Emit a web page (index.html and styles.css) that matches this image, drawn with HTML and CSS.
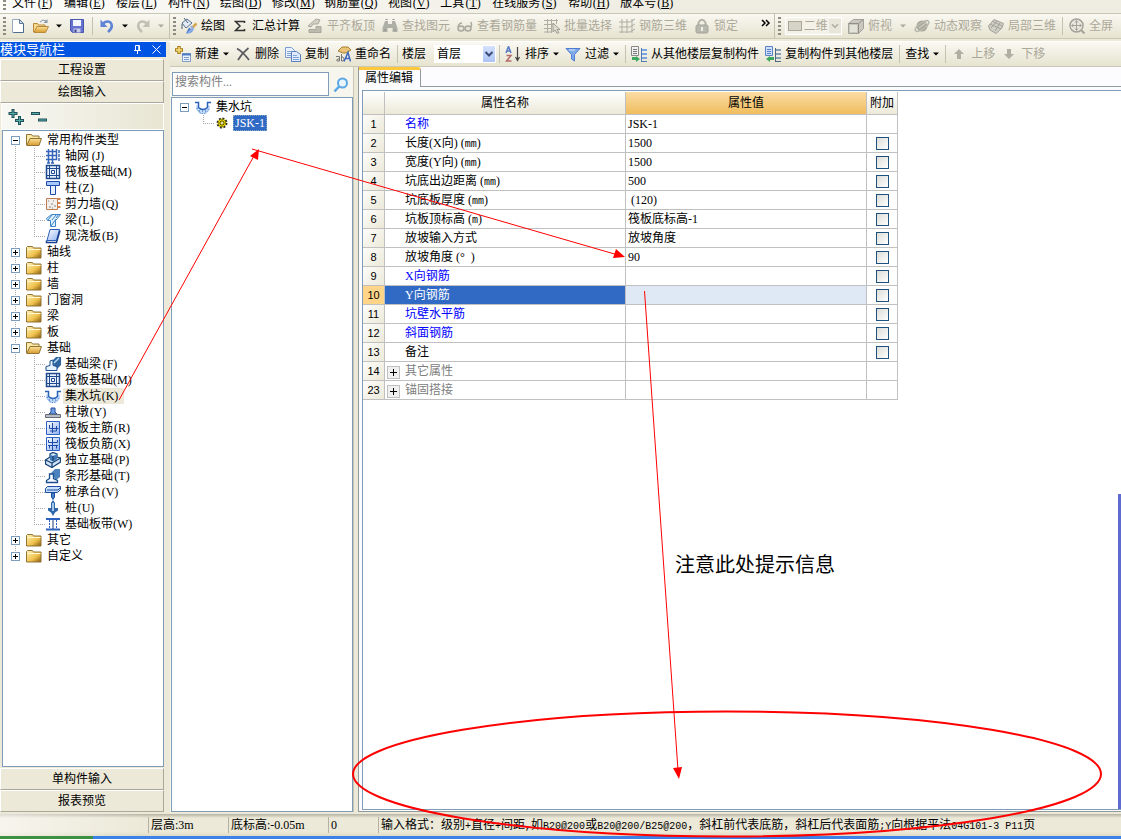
FILE: index.html
```html
<!DOCTYPE html>
<html lang="zh-CN">
<head>
<meta charset="utf-8">
<title>属性编辑</title>
<link rel="stylesheet" href="styles.css">
</head>
<body>
<svg class="defs" aria-hidden="true">
<defs>
<linearGradient id="gFolder" x1="0" y1="0" x2="1" y2="1"><stop offset="0" stop-color="#fff3b8"/><stop offset=".6" stop-color="#efc04a"/><stop offset="1" stop-color="#8a5a10"/></linearGradient>
<linearGradient id="gBlue" x1="0" y1="0" x2="1" y2="1"><stop offset="0" stop-color="#fff"/><stop offset="1" stop-color="#8fb2f0"/></linearGradient>
<linearGradient id="gGold" x1="0" y1="0" x2="0" y2="1"><stop offset="0" stop-color="#fbe29a"/><stop offset="1" stop-color="#d99a2c"/></linearGradient>
</defs>
<symbol id="i-folder" viewBox="0 0 16 16"><path d="M.5 3.500l1-1h5l1 1.500h7.500v10H.5z" fill="url(#gFolder)" stroke="#8f7434"/><path d="M1.500 5.500h13" stroke="#fff8d0"/></symbol>
<symbol id="i-open" viewBox="0 0 16 16"><path d="M.5 13V2.500h5l1 1.500H13v3" fill="#fbe9a8" stroke="#8f7434"/><path d="M.8 13.500L4 6.500h11.500L13 13.500z" fill="url(#gGold)" stroke="#8f7434"/></symbol>
<symbol id="i-new" viewBox="0 0 16 16"><path d="M2.500 1.500h7l4 4v9h-11z" fill="#fff" stroke="#9aa9bd"/><path d="M9.500 1.500v4h4z" fill="#cfe0f4" stroke="#5d7896"/><path d="M13.500 6v8.500h-10" fill="none" stroke="#4e6c8c"/></symbol>
<symbol id="i-opent" viewBox="0 0 16 16"><path d="M.5 14V5.500h4l1 1.500H12v2" fill="#f6d98e" stroke="#b98b3c"/><path d="M1 14.500L4 8.500h11.500l-3 6z" fill="url(#gGold)" stroke="#b98b3c"/><path d="M7 4q3-3.500 6-1" fill="none" stroke="#8b98a8"/><path d="M14.500 1v4h-4z" fill="#8b98a8"/></symbol>
<symbol id="i-save" viewBox="0 0 16 16"><path d="M1.500 1.500h13v13h-11l-2-2z" fill="#6672cf" stroke="#4a55ae"/><path d="M4 2h8v6H4z" fill="#f4f6ff"/><path d="M4.500 10.500h7v4h-7z" fill="#c9cdec"/><path d="M5.500 11.500h2v3h-2z" fill="#3b458f"/></symbol>
<symbol id="i-undo" viewBox="0 0 16 16"><path d="M4 5.500Q8 2 11.500 4.500Q15 9 9 14" fill="none" stroke="#5f83d6" stroke-width="2.500"/><path d="M1.500 1.500v7.500h7z" fill="#5f83d6"/></symbol>
<symbol id="i-redo" viewBox="0 0 16 16"><path d="M12 5.500Q8 2 4.500 4.500Q1 9 7 14" fill="none" stroke="#c2c0b4" stroke-width="2.500"/><path d="M14.500 1.500v7.500h-7z" fill="#c2c0b4"/></symbol>
<symbol id="i-paint" viewBox="0 0 16 16"><path d="M1 5l5-4 5 4-6 5z" fill="#e3ebf5" stroke="#58718e"/><path d="M3 0l4 5M1 6v5" stroke="#445e7c" fill="none"/><path d="M15.500 5.500l-5 5" stroke="#d4a550" stroke-width="2.500"/><path d="M5 15.500l3-6 4 3q-1 3-7 3z" fill="#4b7ad0"/><path d="M10 8l2 3-5 4" fill="none" stroke="#8fb0ea" stroke-width="2"/></symbol>
<symbol id="i-sum" viewBox="0 0 16 16"><path d="M12.500 5V3.500h-9l4.500 4.500-4.500 4.500h9V11" fill="none" stroke="#333" stroke-width="1.500"/></symbol>
<symbol id="i-level" viewBox="0 0 16 16"><path d="M1 8l8-7 4 1-2 4H6l-2 3z" fill="#d2d0c6" stroke="#aaa89c"/><path d="M2 14.500h12v-6H9v3H2z" fill="#bdbbb0" stroke="#aaa89c"/></symbol>
<symbol id="i-find" viewBox="0 0 16 16"><path d="M3 3h3v3h4V3h3l2.500 7v4h-5v-4h-5v4h-5v-4z" fill="#aeb0a8"/><path d="M3.500 1.500h2M10.500 1.500h2M2 12h2M12 12h2" stroke="#8d8f88"/></symbol>
<symbol id="i-glass" viewBox="0 0 16 16"><ellipse cx="4" cy="10.500" rx="3" ry="2.500" fill="#e6e5dc" stroke="#a9a89c" stroke-width="1.500"/><ellipse cx="11" cy="10.500" rx="3" ry="2.500" fill="#e6e5dc" stroke="#a9a89c" stroke-width="1.500"/><path d="M1 9q1-4 4-4M14 9q1-2 0-5" fill="none" stroke="#a9a89c" stroke-width="1.500"/></symbol>
<symbol id="i-batch" viewBox="0 0 16 16"><path d="M0 2.500h14M0 6.500h9M0 10.500h8M0 14h8M3.500 1v14M7.500 1v14M12.500 1v5" stroke="#aeada2"/><path d="M9 5v9l2-2 2 3.500 2-1-2-3h3z" fill="#dddcd2" stroke="#9c9b90"/></symbol>
<symbol id="i-rebar" viewBox="0 0 16 16"><path d="M3 1v14M8 1v14M13 1v14M0 4h11l5-3M0 9h11l5-3M0 14h11l5-3" fill="none" stroke="#aeada2"/></symbol>
<symbol id="i-lock" viewBox="0 0 16 16"><path d="M4.500 7V4.500Q8-1 11.500 4.500V7" fill="none" stroke="#b4b3a8" stroke-width="2"/><rect x="2" y="7" width="12" height="8" rx="1.500" fill="#b9b8ae" stroke="#a3a298"/><path d="M8 9v4" stroke="#efeee6" stroke-width="2"/></symbol>
<symbol id="i-cube" viewBox="0 0 16 16"><path d="M.5 5.500l5-4h10v9l-5 5H.5z" fill="#c9c8be" stroke="#a3a298"/><path d="M.5 5.500h10v10M10.500 5.500l5-4" fill="none" stroke="#918f86"/><path d="M2 7h7v7H2z" fill="#e4e3da"/></symbol>
<symbol id="i-orbit" viewBox="0 0 16 16"><circle cx="8" cy="8" r="5.500" fill="#a9a89c"/><ellipse cx="8" cy="8" rx="8" ry="3" transform="rotate(-35 8 8)" fill="none" stroke="#bab9ae" stroke-width="1.500"/><path d="M5 10l7-5" stroke="#e0dfd6"/></symbol>
<symbol id="i-part" viewBox="0 0 16 16"><path d="M.5 8L6 1.500l9.500 4L14 10l-6 5.500L2 12z" fill="#d0cfc5" stroke="#a3a298"/><path d="M3 10l6-7M7 13l5-8M2 6l11 5M4 3l10 5" stroke="#a3a298"/></symbol>
<symbol id="i-full" viewBox="0 0 16 16"><circle cx="7.500" cy="7.500" r="6.500" fill="#eceae0" stroke="#a3a298" stroke-width="1.500"/><path d="M7.500 3v9M3 7.500h9M6 4.500l1.500-2L9 4.500M6 10.500l1.500 2 1.500-2M4.500 6l-2 1.500 2 1.500M10.500 6l2 1.500-2 1.500" fill="none" stroke="#a3a298"/><path d="M12 12l3.500 3.500" stroke="#a3a298" stroke-width="2"/></symbol>
<symbol id="i-add" viewBox="0 0 16 16"><path d="M4 0v8M0 4h8" stroke="#a67c1c" stroke-width="3.500"/><path d="M4 1v6M1 4h6" stroke="#fbe27c" stroke-width="1.500"/><path d="M7.500 7.500h8v8h-8z" fill="#eaf2ff" stroke="#7d9cc8"/><path d="M7 8.500h9" stroke="#4d7cc4" stroke-width="2"/><path d="M9 11.500h5M9 13.500h5" stroke="#7d9cc8"/></symbol>
<symbol id="i-del" viewBox="0 0 16 16"><path d="M2 2.500Q8 6 14 14M13.500 2Q7 7 3 14" fill="none" stroke="#5b5b60" stroke-width="1.700"/></symbol>
<symbol id="i-copy" viewBox="0 0 16 16"><path d="M.5 1.500h6l3 3v7h-9z" fill="#eaf2ff" stroke="#7c9bd0"/><path d="M6.500 5.500h5l4 3v7h-9z" fill="#dfeaff" stroke="#5a7fc0"/><path d="M2 5.500h4M2 7.500h4M2 9.500h4M8 9.500h4M8 11.500h6M8 13.500h6" stroke="#7da2dc"/></symbol>
<symbol id="i-rename" viewBox="0 0 16 16"><path d="M3 5l4-4h6l3 3-5 3H8z" fill="#e9c377" stroke="#a5802f"/><path d="M1 10.500h3.500v4.500H2q-1.500-1.500 2.500-2.500M6.500 8v7h1.500q2.500-2 0-4H6.500" fill="none" stroke="#777"/><path d="M9 15.500l4-9 2.500 9M10.500 12.500h4" fill="none" stroke="#3d67c0" stroke-width="1.500"/></symbol>
<symbol id="i-sort" viewBox="0 0 16 16"><path d="M1 7l2.500-6.500L6 7M2 5h3.500" fill="none" stroke="#5579c4" stroke-width="1.500"/><path d="M1.500 9.500H6L1.500 15H6.500" fill="none" stroke="#b56a6a" stroke-width="1.500"/><path d="M12.500 1v13M10.500 11l2 3.500 2-3.500" fill="none" stroke="#444" stroke-width="1.200"/></symbol>
<symbol id="i-filter" viewBox="0 0 16 16"><path d="M1 2.500h14l-5.500 6v6.500l-3-2V8.500z" fill="#7fabea" stroke="#4f7bd0"/><path d="M4 4h6" stroke="#dceaff"/></symbol>
<symbol id="i-from" viewBox="0 0 16 16"><path d="M.5.500h7v9h-7z" fill="#f2f2f2" stroke="#888"/><path d="M2 3.500h4M2 5.500h4M2 7.500h4" stroke="#777"/><path d="M10 3h6v2h-6zM10 7h6v2h-6zM10 11h6v2h-6z" fill="#7aa4e0"/><path d="M10.500 2v14M10 15.500h6" stroke="#5079b6"/><path d="M1 11h4v-1l4 3-4 3v-2H1z" fill="#3fa860"/></symbol>
<symbol id="i-to" viewBox="0 0 16 16"><path d="M.5.500h7v9h-7z" fill="#cfe0ff" stroke="#5b82c8"/><path d="M2 3.500h4M2 5.500h4M2 7.500h4" stroke="#5b82c8"/><path d="M10 3h6v2h-6zM10 7h6v2h-6zM10 11h6v2h-6z" fill="#8a9fb8"/><path d="M10.500 2v14M10 15.500h6" stroke="#4f6782"/><path d="M9 11H5v-1l-4 3 4 3v-2h4z" fill="#3fa860"/></symbol>
<symbol id="i-up" viewBox="0 0 16 16"><path d="M8 3l5 5h-3v5H6V8H3z" fill="#b0afa4"/></symbol>
<symbol id="i-down" viewBox="0 0 16 16"><path d="M8 13l5-5h-3V3H6v5H3z" fill="#b0afa4"/></symbol>
<symbol id="i-search" viewBox="0 0 16 16"><circle cx="9.500" cy="6" r="4.500" fill="#eaf6ff" stroke="#5ba7e6" stroke-width="2"/><path d="M6 9.500l-4.500 5" stroke="#5ba7e6" stroke-width="2.500"/></symbol>
<symbol id="i-caret" viewBox="0 0 6 4"><path d="M0 .5h6L3 3.500z" fill="currentColor"/></symbol>
<symbol id="i-more" viewBox="0 0 10 8"><path d="M1 1l3 3-3 3M5 1l3 3-3 3" fill="none" stroke="#000" stroke-width="1.500"/></symbol>
<symbol id="i-chev" viewBox="0 0 10 16"><path d="M1.500 6L5 9.500 8.500 6" fill="none" stroke="currentColor" stroke-width="2"/></symbol>
<symbol id="i-plus2" viewBox="0 0 16 16"><path d="M5 0v9M.5 4.500h9M11.500 7v9M7 11.500h9" stroke="#24505c" stroke-width="3"/><path d="M5 1v7M1.500 4.500h7M11.500 8v7M8 11.500h7" stroke="#4fb0a8"/></symbol>
<symbol id="i-minus2" viewBox="0 0 16 16"><path d="M0 4.500h9M7 11h9" stroke="#24505c" stroke-width="3"/><path d="M1 4.500h7M8 11h7" stroke="#4fb0a8"/></symbol>
<symbol id="i-axis" viewBox="0 0 16 16"><path d="M3.500 1v14M7.500 1v14M11.500 1v11M1 3.500h11M1 7.500h11M1 11.500h11" stroke="#3465b8" stroke-width="1.500"/><path d="M14 2v3M14 6v3M14 10v3M2 15h3M6 15h3" stroke="#3465b8" stroke-width="1.500"/></symbol>
<symbol id="i-raft" viewBox="0 0 16 16"><path d="M1.500 1.500h13v13h-13z" fill="#e8f1fd" stroke="#1f4b8e" stroke-width="1.500"/><path d="M4.500 2v12M11.500 2v12M2 4.500h12M2 11.500h12" stroke="#1f4b8e"/><path d="M6.500 6.500h3v3h-3z" fill="#fff" stroke="#1f4b8e"/></symbol>
<symbol id="i-col" viewBox="0 0 16 16"><path d="M1.500 1.500h13v4h-13z" fill="#a8c8ff" stroke="#1d4aa8"/><path d="M5.500 5.500h5v9h-5z" fill="#e6f0ff" stroke="#1d4aa8"/></symbol>
<symbol id="i-wall" viewBox="0 0 16 16"><path d="M1.500 2.500h11v11h-11z" fill="#f1efec" stroke="#c07c4c"/><path d="M14 2v12" stroke="#d2844e" stroke-dasharray="2 2" stroke-width="3"/><path d="M3 5h1M6 8h2M4 11h2M9 10h2M8 5h1M7 12h1" stroke="#8a8580"/></symbol>
<symbol id="i-beam" viewBox="0 0 16 16"><path d="M1.500 6.500l5-4h9l-3 4-2 2v6h-5v-6h-3z" fill="#dff1ff" stroke="#3e84c6"/><path d="M3 8l4-5M6 14l5-7M7 8l4-5M11 6l3-4" stroke="#3e84c6"/></symbol>
<symbol id="i-slab" viewBox="0 0 16 16"><path d="M5 1.500h9.500l-3 11H2z" fill="url(#gBlue)" stroke="#2a5db8"/><path d="M1.500 12.500v2h10l3.500-12" fill="none" stroke="#173f8a" stroke-width="1.500"/></symbol>
<symbol id="i-fbeam" viewBox="0 0 16 16"><path d="M6 6l5-5h5v8l-4 4z" fill="#2f649f"/><path d="M1 14.500v-4l4-1V5l3-1v5.500l4 1v4z" fill="#e8f3ff" stroke="#1b4f8d"/><path d="M9 7l5-5" stroke="#b8dbf5" stroke-width="1.500"/></symbol>
<symbol id="i-sump" viewBox="0 0 16 16"><path d="M1 6.500h2.500v2q4.500 4 9 0v-2H15v4l-4 4.500H5l-4-4.500z" fill="#c3dbfa"/><path d="M0 3.500h3.500v5q4.500 4 9 0v-5H16" fill="none" stroke="#2a62b8" stroke-width="1.500"/><path d="M2 9q2 5.500 6 5.500T14 9" fill="none" stroke="#2a62b8" stroke-dasharray="1 1.500"/><path d="M4 12h8" stroke="#2a62b8" stroke-dasharray="1 2"/></symbol>
<symbol id="i-pier" viewBox="0 0 16 16"><path d="M6 4h4v4l2 2H4l2-2z" fill="#6f9be0" stroke="#244f9b"/><path d="M.5 10.500h15v3H.5z" fill="#b8bcc4" stroke="#666c78"/></symbol>
<symbol id="i-main" viewBox="0 0 16 16"><path d="M1.500 1.500h13v13h-13z" fill="url(#gBlue)" stroke="#2d62c0"/><path d="M7.500 3v10M4.500 5v3.500h9M11.500 6v5H5" fill="none" stroke="#1d4aa8"/></symbol>
<symbol id="i-neg" viewBox="0 0 16 16"><path d="M1.500 1.500h13v13h-13z" fill="url(#gBlue)" stroke="#2d62c0"/><path d="M7.500 2v12M3.500 4v2.500h9V4M3 9.500h10M4.500 10v2.500M11.500 10v2.500" fill="none" stroke="#1d4aa8"/></symbol>
<symbol id="i-iso" viewBox="0 0 16 16"><path d="M.5 8L5 5V2l3-1.500L12 2v3l3.500 1v4L7 15.500.5 12z" fill="#d3e4f8" stroke="#174578" stroke-width="1.300"/><path d="M5 2.500l3 1.500 4-2v5L8 9.500 5 8z" fill="#3f78b4"/><path d="M.5 8L7 11l8.500-5M7 11v4.500M8 4v5" fill="none" stroke="#174578" stroke-width="1.300"/></symbol>
<symbol id="i-strip" viewBox="0 0 16 16"><path d="M6 5l4-4h5v8l-4 3z" fill="#4c82bd"/><path d="M1.500 14.500v-2l3-2V6h4v4.500l4 2v2z" fill="#f4f9ff" stroke="#1b4f8d" stroke-width="1.300"/></symbol>
<symbol id="i-cap" viewBox="0 0 16 16"><path d="M.5 4.500l2-2h13v3l-3 3H.5z" fill="#c9dfff" stroke="#1b4f9d"/><path d="M2 6h11l2-2" fill="none" stroke="#1b4f9d"/><path d="M6.500 9v4l1.500 2.500L9.500 13V9z" fill="#4c82cd" stroke="#1b4f9d"/></symbol>
<symbol id="i-pile" viewBox="0 0 16 16"><path d="M8 0l2 3v5h3v2.500l-3 2L8 16l-2-3.500-3-2V8h3V3z" fill="#2f68aa"/><path d="M8 3v8" stroke="#d0e6fb" stroke-width="1.500"/></symbol>
<symbol id="i-band" viewBox="0 0 16 16"><path d="M1 3h14M1 13.500h14" stroke="#2d62c0" stroke-width="2"/><path d="M4.500 4v9M11.500 4v9" stroke="#2d62c0" stroke-dasharray="2 1"/><path d="M8 4v9" stroke="#1d3f80"/></symbol>
<symbol id="i-gear" viewBox="0 0 12 12"><circle cx="6" cy="6" r="4.500" fill="#f5e500" stroke="#333" stroke-dasharray="2 1.500" stroke-width="2"/><circle cx="6" cy="6" r="3.500" fill="#f5e500"/><path d="M6 2v8M2 6h8M3.500 3.500l5 5M8.500 3.500l-5 5" stroke="#5a5200"/><circle cx="6" cy="6" r="1" fill="#fff"/></symbol>
</svg>

<nav class="menu">
<span class="grip"></span>
<a href="#">文件<span class="key">(<u>F</u>)</span></a>
<a href="#">编辑<span class="key">(<u>E</u>)</span></a>
<a href="#">楼层<span class="key">(<u>L</u>)</span></a>
<a href="#">构件<span class="key">(<u>N</u>)</span></a>
<a href="#">绘图<span class="key">(<u>D</u>)</span></a>
<a href="#">修改<span class="key">(<u>M</u>)</span></a>
<a href="#">钢筋量<span class="key">(<u>Q</u>)</span></a>
<a href="#">视图<span class="key">(<u>V</u>)</span></a>
<a href="#">工具<span class="key">(<u>T</u>)</span></a>
<a href="#">在线服务<span class="key">(<u>S</u>)</span></a>
<a href="#">帮助<span class="key">(<u>H</u>)</span></a>
<a href="#">版本号<span class="key">(<u>B</u>)</span></a>
</nav>

<div class="bars">
<div class="bar bar-file">
<span class="grip"></span>
<button aria-label="新建"><svg class="ic"><use href="#i-new"/></svg></button>
<button aria-label="打开"><svg class="ic"><use href="#i-opent"/></svg><svg class="caret"><use href="#i-caret"/></svg></button>
<button aria-label="保存"><svg class="ic"><use href="#i-save"/></svg></button>
<span class="sep"></span>
<button aria-label="撤销"><svg class="ic"><use href="#i-undo"/></svg><svg class="caret"><use href="#i-caret"/></svg></button>
<button aria-label="恢复" disabled><svg class="ic"><use href="#i-redo"/></svg><svg class="caret"><use href="#i-caret"/></svg></button>
</div>
<div class="bar bar-draw">
<span class="grip"></span>
<button><svg class="ic"><use href="#i-paint"/></svg>绘图</button>
<button><svg class="ic"><use href="#i-sum"/></svg>汇总计算</button>
<button disabled><svg class="ic"><use href="#i-level"/></svg>平齐板顶</button>
<button disabled><svg class="ic"><use href="#i-find"/></svg>查找图元</button>
<button disabled><svg class="ic"><use href="#i-glass"/></svg>查看钢筋量</button>
<button disabled><svg class="ic"><use href="#i-batch"/></svg>批量选择</button>
<button disabled><svg class="ic"><use href="#i-rebar"/></svg>钢筋三维</button>
<button disabled><svg class="ic"><use href="#i-lock"/></svg>锁定</button>
<button class="more" aria-label="更多"><svg><use href="#i-more"/></svg></button>
</div>
<div class="bar bar-view">
<span class="grip"></span>
<label class="combo combo-off"><select aria-label="视图模式" disabled><option>二维</option></select><span class="swatch"></span><svg class="drop"><use href="#i-chev"/></svg></label>
<button disabled><svg class="ic"><use href="#i-cube"/></svg>俯视<svg class="caret"><use href="#i-caret"/></svg></button>
<button disabled><svg class="ic"><use href="#i-orbit"/></svg>动态观察</button>
<button disabled><svg class="ic"><use href="#i-part"/></svg>局部三维</button>
<span class="sep"></span>
<button disabled><svg class="ic"><use href="#i-full"/></svg>全屏</button>
</div>
</div>

<div class="work">
<aside class="nav">
<header class="nav-title"><span>模块导航栏</span>
<button aria-label="固定"><svg viewBox="0 0 9 9"><path d="M1 5.500h7M4.500 5.500V9M2.500 5V.5h4V5" fill="none" stroke="#fff"/><path d="M6 1v4" stroke="#fff" stroke-width="1.500"/></svg></button>
<button aria-label="关闭"><svg viewBox="0 0 9 9"><path d="M.5.500l8 8M8.500.500l-8 8" stroke="#fff"/></svg></button></header>
<button class="module">工程设置</button>
<button class="module">绘图输入</button>
<div class="nav-tools"><button aria-label="全部展开"><svg class="ic"><use href="#i-plus2"/></svg></button><button aria-label="全部折叠"><svg class="ic"><use href="#i-minus2"/></svg></button></div>
<ul class="tree">
<li><div class="row"><span class="exp"></span><svg class="ic"><use href="#i-open"/></svg>常用构件类型</div>
<ul>
<li><svg class="ic"><use href="#i-axis"/></svg><span>轴网<span class="key">(J)</span></span></li>
<li><svg class="ic"><use href="#i-raft"/></svg><span>筏板基础<span class="key">(M)</span></span></li>
<li><svg class="ic"><use href="#i-col"/></svg><span>柱<span class="key">(Z)</span></span></li>
<li><svg class="ic"><use href="#i-wall"/></svg><span>剪力墙<span class="key">(Q)</span></span></li>
<li><svg class="ic"><use href="#i-beam"/></svg><span>梁<span class="key">(L)</span></span></li>
<li><svg class="ic"><use href="#i-slab"/></svg><span>现浇板<span class="key">(B)</span></span></li>
</ul></li>
<li><div class="row"><span class="exp shut"></span><svg class="ic"><use href="#i-folder"/></svg>轴线</div></li>
<li><div class="row"><span class="exp shut"></span><svg class="ic"><use href="#i-folder"/></svg>柱</div></li>
<li><div class="row"><span class="exp shut"></span><svg class="ic"><use href="#i-folder"/></svg>墙</div></li>
<li><div class="row"><span class="exp shut"></span><svg class="ic"><use href="#i-folder"/></svg>门窗洞</div></li>
<li><div class="row"><span class="exp shut"></span><svg class="ic"><use href="#i-folder"/></svg>梁</div></li>
<li><div class="row"><span class="exp shut"></span><svg class="ic"><use href="#i-folder"/></svg>板</div></li>
<li><div class="row"><span class="exp"></span><svg class="ic"><use href="#i-open"/></svg>基础</div>
<ul>
<li><svg class="ic"><use href="#i-fbeam"/></svg><span>基础梁<span class="key">(F)</span></span></li>
<li><svg class="ic"><use href="#i-raft"/></svg><span>筏板基础<span class="key">(M)</span></span></li>
<li><svg class="ic"><use href="#i-sump"/></svg><span class="current">集水坑<span class="key">(K)</span></span></li>
<li><svg class="ic"><use href="#i-pier"/></svg><span>柱墩<span class="key">(Y)</span></span></li>
<li><svg class="ic"><use href="#i-main"/></svg><span>筏板主筋<span class="key">(R)</span></span></li>
<li><svg class="ic"><use href="#i-neg"/></svg><span>筏板负筋<span class="key">(X)</span></span></li>
<li><svg class="ic"><use href="#i-iso"/></svg><span>独立基础<span class="key">(P)</span></span></li>
<li><svg class="ic"><use href="#i-strip"/></svg><span>条形基础<span class="key">(T)</span></span></li>
<li><svg class="ic"><use href="#i-cap"/></svg><span>桩承台<span class="key">(V)</span></span></li>
<li><svg class="ic"><use href="#i-pile"/></svg><span>桩<span class="key">(U)</span></span></li>
<li><svg class="ic"><use href="#i-band"/></svg><span>基础板带<span class="key">(W)</span></span></li>
</ul></li>
<li><div class="row"><span class="exp shut"></span><svg class="ic"><use href="#i-folder"/></svg>其它</div></li>
<li><div class="row"><span class="exp shut"></span><svg class="ic"><use href="#i-folder"/></svg>自定义</div></li>
</ul>
<button class="module">单构件输入</button>
<button class="module">报表预览</button>
</aside>

<main class="main">
<div class="bar bar-edit">
<button><svg class="ic"><use href="#i-add"/></svg>新建<svg class="caret"><use href="#i-caret"/></svg></button>
<button><svg class="ic"><use href="#i-del"/></svg>删除</button>
<button><svg class="ic"><use href="#i-copy"/></svg>复制</button>
<button><svg class="ic"><use href="#i-rename"/></svg>重命名</button>
<span class="sep"></span>
<label class="floor" for="floor">楼层</label>
<span class="combo"><select id="floor"><option>首层</option></select><svg class="drop"><use href="#i-chev"/></svg></span>
<span class="sep"></span>
<button><svg class="ic"><use href="#i-sort"/></svg>排序<svg class="caret"><use href="#i-caret"/></svg></button>
<button><svg class="ic"><use href="#i-filter"/></svg>过滤<svg class="caret"><use href="#i-caret"/></svg></button>
<span class="sep"></span>
<button><svg class="ic"><use href="#i-from"/></svg>从其他楼层复制构件</button>
<button><svg class="ic"><use href="#i-to"/></svg>复制构件到其他楼层</button>
<span class="sep"></span>
<button>查找<svg class="caret"><use href="#i-caret"/></svg></button>
<span class="sep"></span>
<button disabled><svg class="ic"><use href="#i-up"/></svg>上移</button>
<button disabled><svg class="ic"><use href="#i-down"/></svg>下移</button>
</div>
<div class="panes">
<section class="parts">
<div class="search"><input type="text" placeholder="搜索构件..." aria-label="搜索构件"><button aria-label="搜索"><svg class="ic"><use href="#i-search"/></svg></button></div>
<ul class="tree parts-tree">
<li><div class="row"><span class="exp"></span><svg class="ic"><use href="#i-sump"/></svg>集水坑</div>
<ul><li><svg class="gear"><use href="#i-gear"/></svg><span class="picked">JSK-1</span></li></ul></li>
</ul>
</section>
<section class="props">
<div class="tabs"><button class="tab">属性编辑</button></div>
<div class="sheet">
<table>
<colgroup><col class="c-no"><col class="c-name"><col class="c-val"><col class="c-add"></colgroup>
<thead><tr><th></th><th>属性名称</th><th class="hot">属性值</th><th>附加</th></tr></thead>
<tbody>
<tr><th>1</th><td class="link">名称</td><td>JSK-1</td><td></td></tr>
<tr><th>2</th><td>长度(X向) (<i>mm</i>)</td><td>1500</td><td><input type="checkbox" aria-label="附加 长度"></td></tr>
<tr><th>3</th><td>宽度(Y向) (<i>mm</i>)</td><td>1500</td><td><input type="checkbox" aria-label="附加 宽度"></td></tr>
<tr><th>4</th><td>坑底出边距离 (<i>mm</i>)</td><td>500</td><td><input type="checkbox" aria-label="附加 坑底出边距离"></td></tr>
<tr><th>5</th><td>坑底板厚度 (<i>mm</i>)</td><td>&nbsp;(120)</td><td><input type="checkbox" aria-label="附加 坑底板厚度"></td></tr>
<tr><th>6</th><td>坑板顶标高 (<i>m</i>)</td><td>筏板底标高-1</td><td><input type="checkbox" aria-label="附加 坑板顶标高"></td></tr>
<tr><th>7</th><td>放坡输入方式</td><td>放坡角度</td><td><input type="checkbox" aria-label="附加 放坡输入方式"></td></tr>
<tr><th>8</th><td>放坡角度 (°&nbsp; )</td><td>90</td><td><input type="checkbox" aria-label="附加 放坡角度"></td></tr>
<tr><th>9</th><td class="link">X向钢筋</td><td></td><td><input type="checkbox" aria-label="附加 X向钢筋"></td></tr>
<tr class="sel"><th>10</th><td>Y向钢筋</td><td></td><td><input type="checkbox" aria-label="附加 Y向钢筋"></td></tr>
<tr><th>11</th><td class="link">坑壁水平筋</td><td></td><td><input type="checkbox" aria-label="附加 坑壁水平筋"></td></tr>
<tr><th>12</th><td class="link">斜面钢筋</td><td></td><td><input type="checkbox" aria-label="附加 斜面钢筋"></td></tr>
<tr><th>13</th><td>备注</td><td></td><td><input type="checkbox" aria-label="附加 备注"></td></tr>
<tr class="group"><th>14</th><td><button aria-label="展开其它属性"><svg viewBox="0 0 9 9"><path d="M4.500 1v7M1 4.500h7" stroke="#000"/></svg></button>其它属性</td><td></td><td></td></tr>
<tr class="group"><th>23</th><td><button aria-label="展开锚固搭接"><svg viewBox="0 0 9 9"><path d="M4.500 1v7M1 4.500h7" stroke="#000"/></svg></button>锚固搭接</td><td></td><td></td></tr>
</tbody>
</table>
<span class="edge"></span>
</div>
</section>
</div>
</main>
</div>

<footer class="status">
<span class="s-blank"></span><span class="s-cell s-wide">层高:3m</span><span class="s-cell s-base">底标高:-0.05m</span><span class="s-cell s-num">0</span>
<span class="s-cell s-msg">输入格式：级别<i>+</i>直径<i>+</i>间距<i>,</i>如<i>B20@200</i>或<i>B20@200/B25@200</i>，斜杠前代表底筋，斜杠后代表面筋<i>;Y</i>向根据平法<i>04G101-3 P11</i>页</span>
</footer>
<div class="taskbar"><span class="start"></span></div>

<svg class="marks" width="1121" height="839" viewBox="0 0 1121 839" aria-hidden="true">
<g fill="none" stroke="#f00"><path d="M119 400L255 154M252 149L618 255M644.500 291L678 770"/><ellipse cx="727" cy="774" rx="374" ry="62.500" stroke-width="2"/></g>
<path d="M259 149l-1 11-8-4zM625 257l-12 1 3-9zM679 779l-6-11 9-1z" fill="#f00"/>
</svg>
<p class="note">注意此处提示信息</p>
</body>
</html>
```

FILE: styles.css
```css
* { box-sizing: border-box; }
body {
  margin: 0;
  height: 100vh;
  display: flex;
  flex-direction: column;
  overflow: hidden;
  position: relative;
  background: #ece9d8;
  color: #000;
  font: 12px/16px "Liberation Serif", "Noto Sans CJK SC", serif;
  white-space: nowrap;
}
button, input, select { font: inherit; color: inherit; margin: 0; padding: 0; border: 0; background: none; }
ul { list-style: none; margin: 0; padding: 0; }
svg { display: block; flex: none; }
.defs { position: absolute; width: 0; height: 0; }
.ic { width: 16px; height: 16px; }
.caret { width: 6px; height: 4px; }
.key { display: inline-block; width: 18px; text-align: center; }

.menu {
  display: flex;
  gap: 10px;
  height: 14px;
  padding-left: 3px;
  line-height: 7px;
  background: linear-gradient(90deg, #fbfbf9, #efede2 60%);
  border-bottom: 1px solid #c9c6b4;
}
.menu a { color: inherit; text-decoration: none; }
.menu .grip { height: 10px; margin-right: -4px; }

.grip { width: 3px; height: 18px; background: repeating-linear-gradient(#8e8c80 0 2px, transparent 2px 4px); }
.sep { width: 1px; height: 18px; background: #c5c2af; }
.bars { display: flex; height: 28px; padding-bottom: 2px; border-bottom: 1px solid #fff; }
.bar {
  display: flex;
  align-items: center;
  gap: 7px;
  background: linear-gradient(#f9f8f2, #f0eee1 50%, #e6e3cf);
  border-bottom: 1px solid #cbc8b3;
}
.bar button { display: flex; align-items: center; gap: 4px; height: 22px; }
.bar button:disabled { color: #aca899; }
.bar-file { width: 170px; padding-left: 3px; gap: 7px; border-right: 1px solid #c5c2af; }
.bar-file button { gap: 7px; }
.bar-file .grip { margin-right: -3px; }
.bar-file .sep { margin-right: -1px; }
.bar-draw { flex: 1; padding: 0 3px; border-right: 1px solid #c5c2af; }
.bar-draw .grip, .bar-view .grip { margin-right: -2px; }
.bar-draw .more { margin-left: auto; padding-top: 4px; align-items: flex-start; }
.more svg { width: 10px; height: 8px; }
.bar-view { padding: 0 8px 0 3px; width: 346px; gap: 6px; }
.bar-view button .caret { margin: 0 2px 0 4px; }

.combo { display: grid; width: 62px; height: 18px; background: #fff; align-items: center; }
.combo > * { grid-area: 1 / 1; }
.combo select { appearance: none; width: 100%; padding-left: 3px; opacity: 1; }
.drop { width: 12px; height: 16px; justify-self: end; margin-right: 1px; background: linear-gradient(#d5e1fd, #adc3f5); color: #3a4d7a; pointer-events: none; }
.combo-off { background: #f4f2e8; border: 1px solid #fff; color: #aca899; }
.combo-off select { padding-left: 18px; }
.combo-off .drop { height: 14px; margin-right: 0; background: #e8e6da; color: #b4b2a6; }
.swatch { width: 14px; height: 10px; margin-left: 2px; background: #d6d4c8; border: 1px solid #aca899; pointer-events: none; }

.work { flex: 1; display: flex; gap: 4px; min-height: 0; }
.nav { width: 166px; display: flex; flex-direction: column; padding-bottom: 2px; }
.nav-title {
  display: flex;
  align-items: center;
  gap: 10px;
  height: 15px;
  padding-right: 5px;
  margin-bottom: 2px;
  background: #0054e3;
  color: #fff;
  font-size: 13px;
  line-height: 15px;
}
.nav-title span { flex: 1; }
.nav-title svg { width: 9px; height: 9px; }
.module { height: 22px; margin-right: 2px; border: 1px solid #aca899; border-top-color: #fff; border-left-color: #fff; background: #ece9d8; }
.nav-tools { display: flex; gap: 7px; align-items: center; height: 27px; margin: 0 2px 0 1px; padding-left: 6px; border: 1px solid #fff; background: linear-gradient(90deg, #f8f8f4, #e8e5d2); }

.tree {
  flex: 1;
  margin: 0 2px 1px;
  padding-top: 1px;
  border: 1px solid #7f9db9;
  background: #fff;
}
.nav .tree > li { background: repeating-linear-gradient(#aaa 0 1px, transparent 1px 2px) 12px 0 / 1px 100% no-repeat; }
.nav .tree > li:first-child { background-position: 12px 8px; }
.nav .tree > li:last-child { background-size: 1px 8px; }
.row, .tree ul li { display: flex; align-items: center; height: 16px; }
.row { padding-left: 8px; }
.row .ic { margin-right: 5px; margin-left: 6px; }
.exp {
  width: 9px;
  height: 9px;
  border: 1px solid #7b9ebd;
  background: linear-gradient(#000, #000) center / 5px 1px no-repeat, #fff;
}
.exp.shut { background: linear-gradient(#000, #000) center / 5px 1px no-repeat, linear-gradient(#000, #000) center / 1px 5px no-repeat, #fff; }
.tree ul {
  padding-left: 31px;
  background: repeating-linear-gradient(#aaa 0 1px, transparent 1px 2px) 31px 0 / 1px calc(100% - 8px) no-repeat;
}
.tree ul li::before { content: ""; width: 11px; height: 1px; background: repeating-linear-gradient(90deg, #aaa 0 1px, transparent 1px 2px); }
.tree ul .ic { margin-right: 2px; }
.tree ul li > span { padding: 0 2px; }
.tree ul li > .current { padding-right: 5px; background: #ece9d8; }

.main { flex: 1; min-width: 0; display: flex; flex-direction: column; }
.bar-edit { height: 25px; padding-left: 5px; gap: 6px; }
.bar-edit .sep { margin-right: -1px; }
.floor { margin-right: 2px; margin-left: -1px; }
.bar-edit .combo { margin-right: -3px; }
.panes { flex: 1; display: flex; gap: 4px; min-height: 0; padding-bottom: 2px; }
.parts { width: 184px; display: flex; flex-direction: column; padding-top: 3px; background: #f6f5ee; border-right: 1px solid #c9c6b4; }
.search { display: flex; gap: 4px; padding: 2px 0 0 2px; height: 27px; }
.search input { flex: 1; min-width: 0; height: 24px; padding: 0 2px 4px; border: 1px solid #7f9db9; background: #fff; }
.search input::placeholder { color: #808080; opacity: 1; }
.search button { width: 20px; }
.parts-tree { margin: 0 0 0 1px; padding-top: 1px; }
.parts-tree .ic { margin-right: 5px; margin-left: 6px; }
.gear { width: 12px; height: 12px; margin-right: 5px; margin-left: 2px; }
.picked { background: #316ac5; color: #fff; outline: 1px dotted #8ab; outline-offset: -1px; }

.props { flex: 1; min-width: 0; display: flex; flex-direction: column; border-left: 1px solid #919b9c; border-bottom: 1px solid #919b9c; background: #fcfcfe; }
.tabs { display: flex; height: 20px; border-bottom: 1px solid #919b9c; }
.tab { height: 20px; padding: 0 7px 3px 6px; border-right: 1px solid #919b9c; border-top: 3px solid #ffc73c; border-radius: 0 3px 0 0; background: #fcfcfe; }
.sheet { flex: 1; display: flex; justify-content: space-between; margin: 3px 0 1px 3px; padding-top: 1px; border: 1px solid #7f9db9; border-right: 0; background: #fff; }
.edge { width: 3px; align-self: flex-end; height: 44%; background: #5f6bd0; }

table { border-collapse: separate; border-spacing: 0; table-layout: fixed; width: 535px; align-self: flex-start; }
.c-no { width: 22px; }
.c-add { width: 31px; }
th, td { height: 19px; padding: 0 0 0 2px; border-right: 1px solid #c0c0c0; border-bottom: 1px solid #c0c0c0; text-align: left; font-weight: normal; line-height: 16px; }
thead th { height: 23px; padding: 0; text-align: center; background: linear-gradient(#fff, #ece9d8); }
thead .hot { background: linear-gradient(#fbdca4, #f0bd5e); }
tbody th { padding: 0; text-align: center; font-family: "Liberation Sans", sans-serif; font-size: 11px; background: linear-gradient(135deg, #fdfdfb, #ece9d8); }
td:nth-child(2) { padding-left: 20px; }
td:last-child { padding: 0; }
.link { color: #00f; }
.sel th { background: #ffd58a; }
.sel td:nth-child(2) { background: #316ac5; color: #fff; }
.sel td:nth-child(3) { background: #dfe9f5; }
.group td { color: #808080; }
.group td:nth-child(2) { padding-left: 2px; }
.group button { display: inline-grid; place-items: center; width: 13px; height: 13px; margin-right: 5px; border: 1px solid #c0c0c0; background: #f0f0f0; vertical-align: middle; }
.group svg { width: 9px; height: 9px; }
input[type="checkbox"] { appearance: none; display: block; width: 13px; height: 13px; margin: 0 auto; border: 1px solid #1c5180; background: linear-gradient(135deg, #dcdcd7, #fff); }

.status { display: flex; align-items: center; height: 22px; background: linear-gradient(#b5b2a3, #ece9d8 4px, #ece9d8 80%, #dedac6); }
.s-blank { width: 148px; align-self: stretch; background: linear-gradient(90deg, #fff8, #fff0); }
.s-cell { padding-left: 2px; border-left: 1px solid #b5b2a3; line-height: 16px; }
.s-wide { width: 80px; }
.s-base { width: 100px; }
.s-num { width: 50px; }
.s-msg { flex: 1; }
td i, .status i { font: 10px "Liberation Mono", monospace; }
.taskbar { height: 3px; background: #3c81e8; }
.start { display: block; width: 93px; height: 3px; background: #3d9140; }

.marks { position: absolute; left: 0; top: 0; pointer-events: none; }
.note { position: absolute; left: 675px; top: 553px; margin: 0; font-size: 20px; line-height: 24px; }
```
